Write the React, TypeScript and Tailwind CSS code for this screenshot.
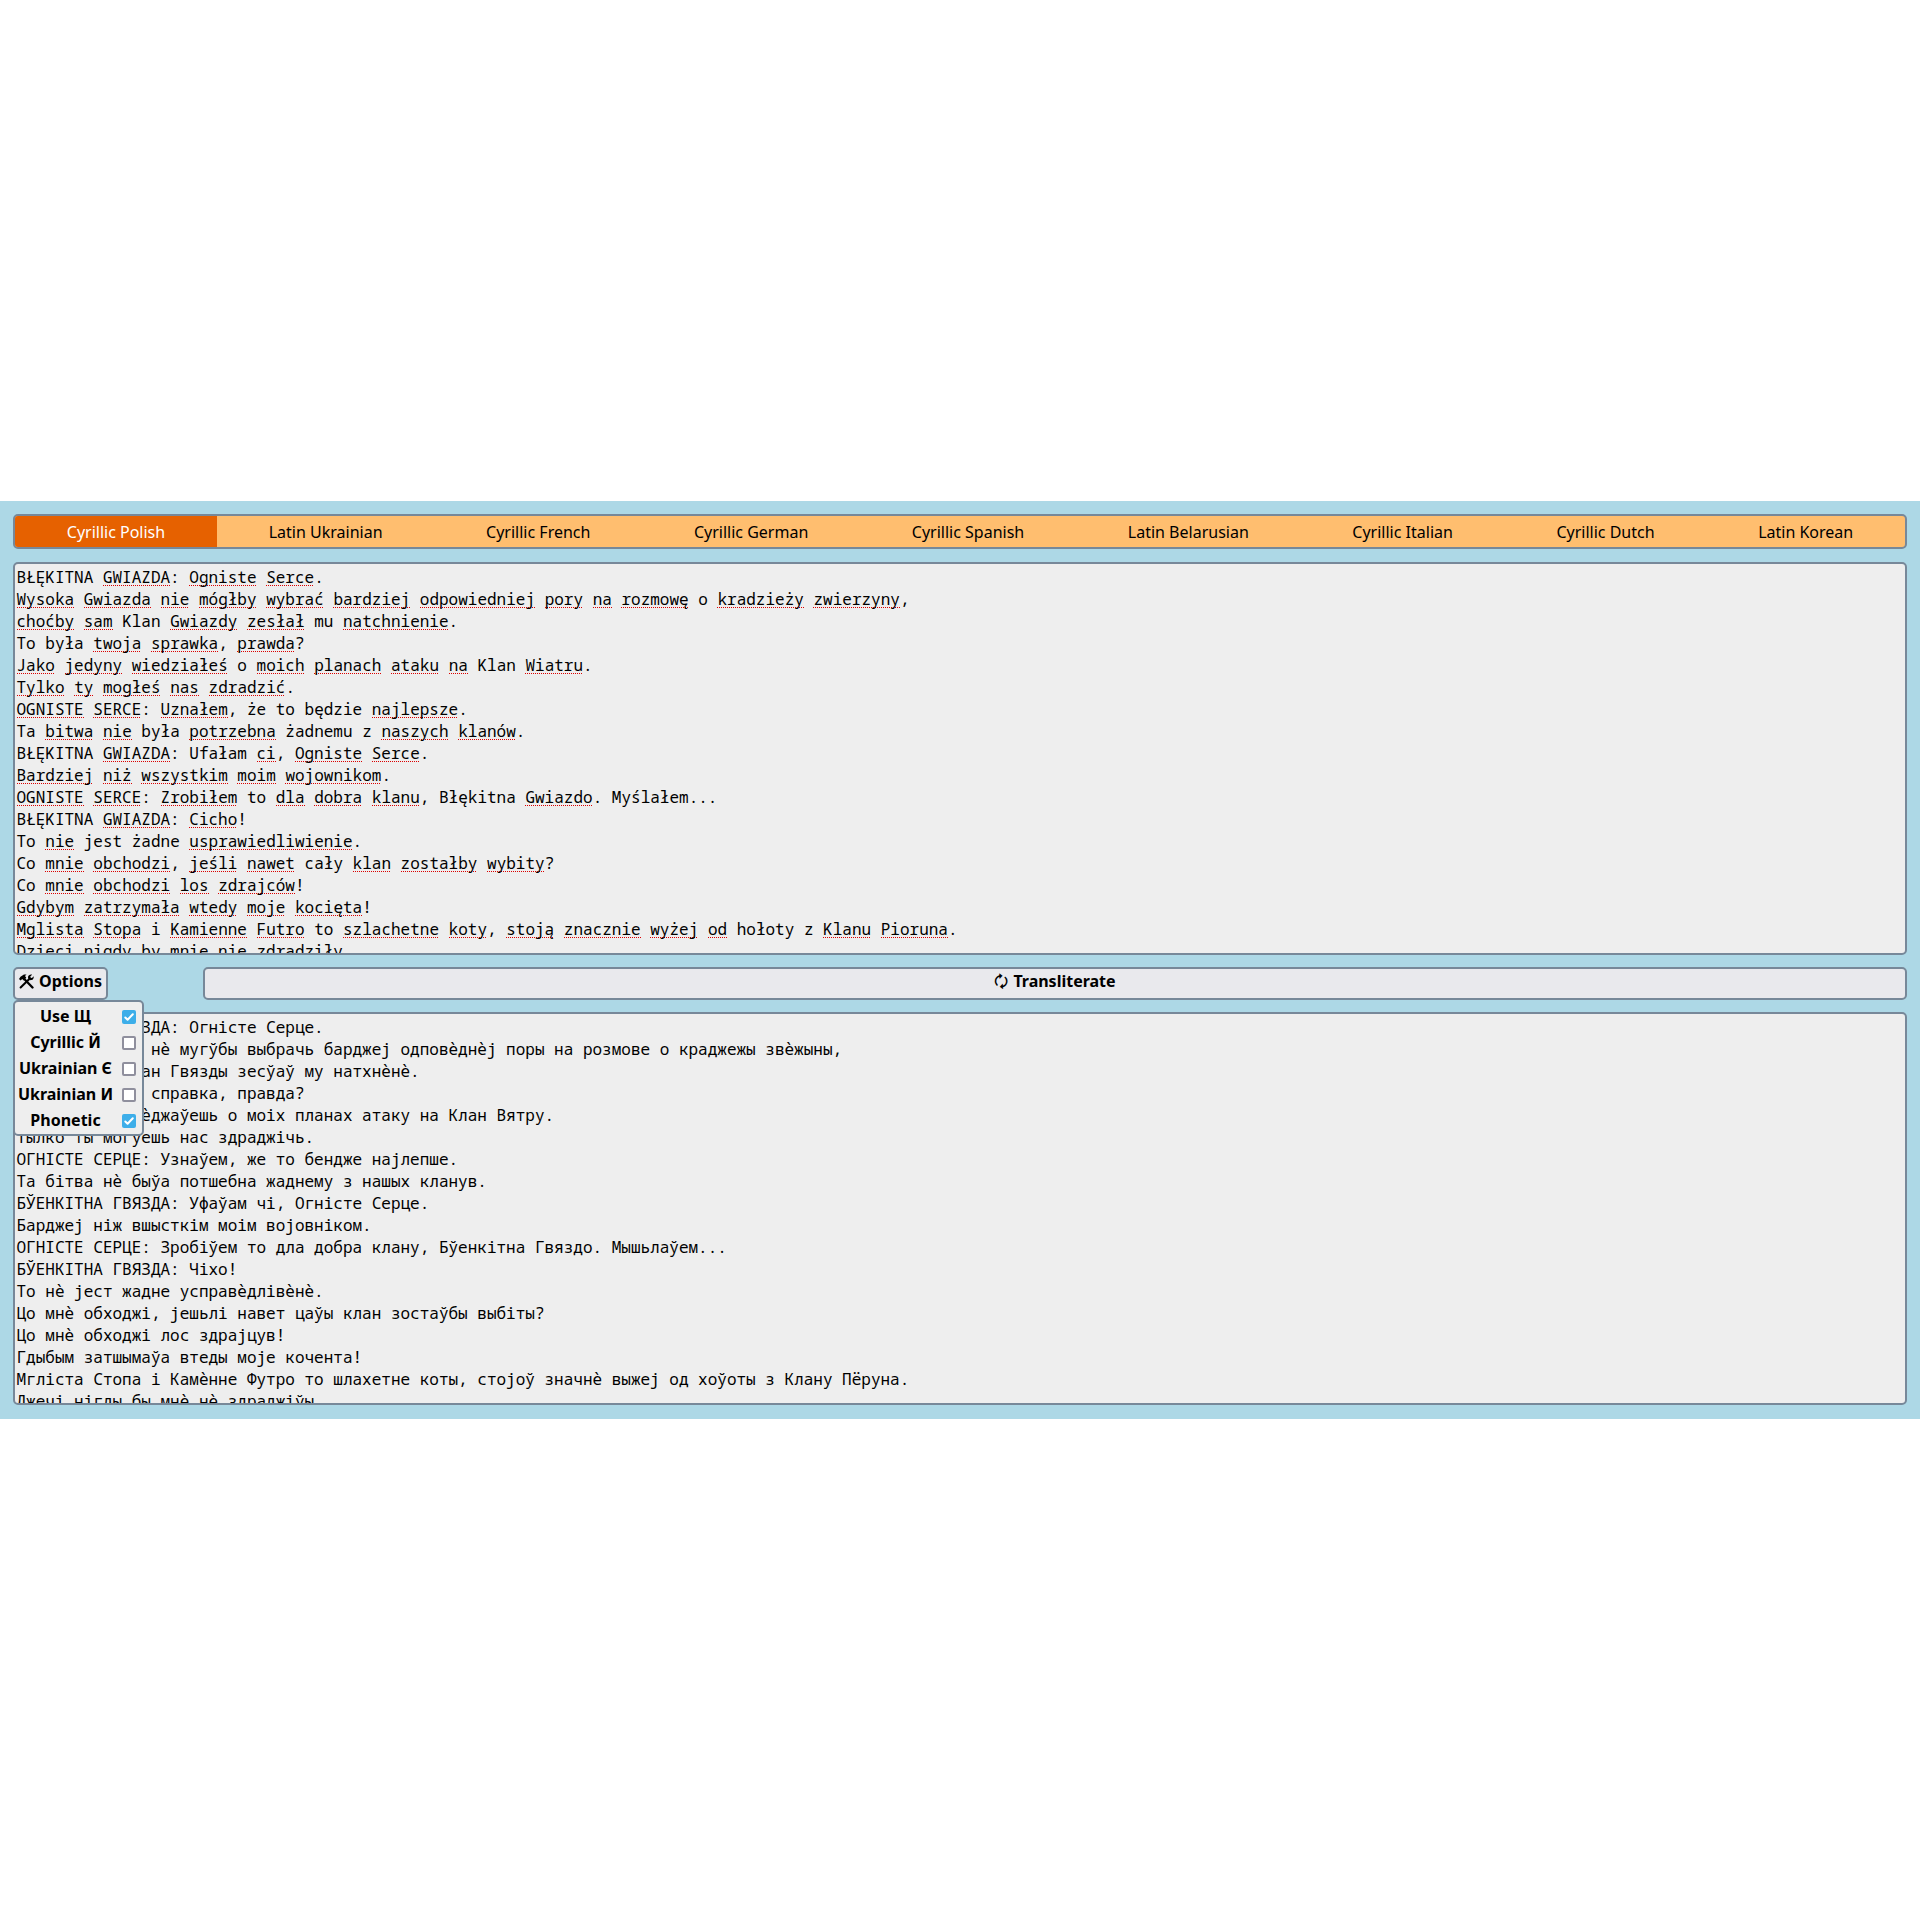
import React from 'react';

const TABS = [
  'Cyrillic Polish',
  'Latin Ukrainian',
  'Cyrillic French',
  'Cyrillic German',
  'Cyrillic Spanish',
  'Latin Belarusian',
  'Cyrillic Italian',
  'Cyrillic Dutch',
  'Latin Korean',
];

// Words wrapped in square brackets are flagged by the spell checker.
const SOURCE = [
  'BŁĘKITNA [GWIAZDA]: [Ogniste] [Serce].',
  '[Wysoka] [Gwiazda] [nie] [mógłby] [wybrać] [bardziej] [odpowiedniej] [pory] [na] [rozmowę] o [kradzieży] [zwierzyny],',
  '[choćby] [sam] Klan [Gwiazdy] [zesłał] mu [natchnienie].',
  'To była [twoja] [sprawka], [prawda]?',
  '[Jako] [jedyny] [wiedziałeś] o [moich] [planach] [ataku] [na] Klan [Wiatru].',
  '[Tylko] [ty] [mogłeś] [nas] [zdradzić].',
  '[OGNISTE] [SERCE]: [Uznałem], że to będzie [najlepsze].',
  'Ta [bitwa] [nie] była [potrzebna] żadnemu z [naszych] [klanów].',
  'BŁĘKITNA [GWIAZDA]: Ufałam [ci], [Ogniste] [Serce].',
  '[Bardziej] [niż] [wszystkim] [moim] [wojownikom].',
  '[OGNISTE] [SERCE]: [Zrobiłem] to [dla] [dobra] [klanu], Błękitna [Gwiazdo]. Myślałem...',
  'BŁĘKITNA [GWIAZDA]: [Cicho]!',
  'To [nie] jest żadne [usprawiedliwienie].',
  'Co [mnie] [obchodzi], [jeśli] [nawet] cały [klan] [zostałby] [wybity]?',
  'Co [mnie] [obchodzi] [los] [zdrajców]!',
  '[Gdybym] [zatrzymała] [wtedy] [moje] [kocięta]!',
  '[Mglista] [Stopa] i [Kamienne] [Futro] to [szlachetne] [koty], [stoją] [znacznie] [wyżej] [od] hołoty z [Klanu] [Pioruna].',
  'Dzieci nigdy by mnie nie zdradziły.',
];

const RESULT = [
  'БЎЕНКІТНА ГВЯЗДА: Огністе Серце.',
  'Высока Гвязда нѐ мугўбы выбрачь барджеј одповѐднѐј поры на розмове о краджежы звѐжыны,',
  'хочьбы сам Клан Гвязды зесўаў му натхнѐнѐ.',
  'То быўа твоја справка, правда?',
  'Јако једыны вѐджаўешь о моіх планах атаку на Клан Вятру.',
  'Тылко ты могўешь нас здраджічь.',
  'ОГНІСТЕ СЕРЦЕ: Узнаўем, же то бендже најлепше.',
  'Та бітва нѐ быўа потшебна жаднему з нашых кланув.',
  'БЎЕНКІТНА ГВЯЗДА: Уфаўам чі, Огністе Серце.',
  'Барджеј ніж вшысткім моім војовніком.',
  'ОГНІСТЕ СЕРЦЕ: Зробіўем то дла добра клану, Бўенкітна Гвяздо. Мышьлаўем...',
  'БЎЕНКІТНА ГВЯЗДА: Чіхо!',
  'То нѐ јест жадне усправѐдлівѐнѐ.',
  'Цо мнѐ обходжі, јешьлі навет цаўы клан зостаўбы выбіты?',
  'Цо мнѐ обходжі лос здрајцув!',
  'Гдыбым затшымаўа втеды моје кочента!',
  'Мгліста Стопа і Камѐнне Футро то шлахетне коты, стојоў значнѐ выжеј од хоўоты з Клану Пёруна.',
  'Джечі нігды бы мнѐ нѐ здраджіўы.',
];

const OPTIONS = [
  { label: 'Use Щ', on: true },
  { label: 'Cyrillic Й', on: false },
  { label: 'Ukrainian Є', on: false },
  { label: 'Ukrainian И', on: false },
  { label: 'Phonetic', on: true },
];

function SpellLine({ text }: { text: string }) {
  return (
    <>
      {text.split(/(\[[^\]]+\])/).map((part, i) =>
        part.startsWith('[') ? (
          <span
            key={i}
            className="bg-[repeating-linear-gradient(90deg,#dc0000_0_1px,transparent_1px_2px)] bg-[length:100%_1px] bg-[position:0_19px] bg-no-repeat"
          >
            {part.slice(1, -1)}
          </span>
        ) : (
          part
        ),
      )}
    </>
  );
}

function TextPane({ lines, spell }: { lines: string[]; spell?: boolean }) {
  return (
    <div className="h-[393px] overflow-hidden rounded-[5px] border-2 border-[#778899] bg-[#eeeeee] py-0.5 pl-[1.5px] font-['Noto_Sans_Mono','DejaVu_Sans_Mono',monospace] text-[16px] leading-[22px] text-black">
      {lines.map((line, i) => (
        <div key={i} className="h-[22px] whitespace-pre">
          {spell ? <SpellLine text={line} /> : line}
        </div>
      ))}
    </div>
  );
}

function ToolsIcon() {
  return (
    <svg viewBox="0 0 14 14" className="mt-1 size-[15px]" fill="none" stroke="#000">
      <path d="M5.6 5.4 12.6 12.6" strokeWidth="2.2" strokeLinecap="round" />
      <path d="M0 4.6 1.4 2.6 4.6.5 7 .4 5.6 1.8 6.8 3.6 4.4 6 3 4.7 1.5 6.1Z" fill="#000" stroke="none" />
      <path d="M1.5 12.6 9.4 4.9" strokeWidth="1.9" strokeLinecap="round" />
      <path d="M12.2.6 10.5 2.3 11 3.4 12.1 3.7 13.7 2C14 3.7 13.2 5.3 11.6 5.7 9.8 6.1 8.2 4.7 8.4 2.9 8.6 1.2 10.4.1 12.2.6Z" fill="#000" stroke="none" />
    </svg>
  );
}

function Checkbox({ on }: { on: boolean }) {
  return on ? (
    <span className="flex size-3.5 items-center justify-center rounded-[2px] bg-[#3daee9]">
      <svg viewBox="0 0 14 14" className="size-3.5" fill="none" stroke="#fff" strokeWidth="2" strokeLinecap="round" strokeLinejoin="round">
        <path d="M3.3 7.5 5.6 9.8 10.8 4.2" />
      </svg>
    </span>
  ) : (
    <span className="size-3.5 rounded-[2px] border-2 border-[#8f8f9d] bg-white" />
  );
}

export default function App() {
  return (
    <div className="flex h-[1920px] w-full flex-col justify-center bg-white font-['Noto_Sans',sans-serif] text-[16px] leading-[22px] text-black">
      <div className="flex h-[918px] flex-col bg-[#add8e6] px-[13px] pt-[13px]">
        <nav className="flex h-[35px] overflow-hidden rounded-[5px] border-2 border-[#778899] bg-[#ffbe6f]">
          {TABS.map((tab, i) => (
            <div
              key={tab}
              className={
                i === 0
                  ? 'flex grow items-center justify-center bg-[#e66100] text-white'
                  : 'flex grow items-center justify-center'
              }
            >
              {tab}
            </div>
          ))}
        </nav>

        <div className="mt-[13px]">
          <TextPane lines={SOURCE} spell />
        </div>

        <div className="mt-3 flex h-[33px] justify-between font-bold">
          <div className="relative w-[95px]">
            <button className="flex h-[33px] w-[95px] items-start rounded-[5px] border-2 border-[#778899] bg-[#e9e9ed] pt-px pl-1">
              <span className="w-5">
                <ToolsIcon />
              </span>
              <span>Options</span>
            </button>
            <div className="absolute top-[33px] left-0 z-10 flex h-[136px] w-[131px] flex-col rounded-[5px] border-2 border-[#778899] bg-[#eeeeee] pt-0.5">
              {OPTIONS.map((o) => (
                <div key={o.label} className="flex h-[26px] items-center">
                  <span className="w-[101px] pb-0.5 text-center">{o.label}</span>
                  <span className="ml-1.5 flex">
                    <Checkbox on={o.on} />
                  </span>
                </div>
              ))}
            </div>
          </div>
          <button className="flex w-[1704px] items-start justify-center gap-[5px] rounded-[5px] border-2 border-[#778899] bg-[#e9e9ed] pt-px">
            <span className="font-normal">🗘</span>
            <span>Transliterate</span>
          </button>
        </div>

        <div className="mt-3">
          <TextPane lines={RESULT} />
        </div>
      </div>
    </div>
  );
}
